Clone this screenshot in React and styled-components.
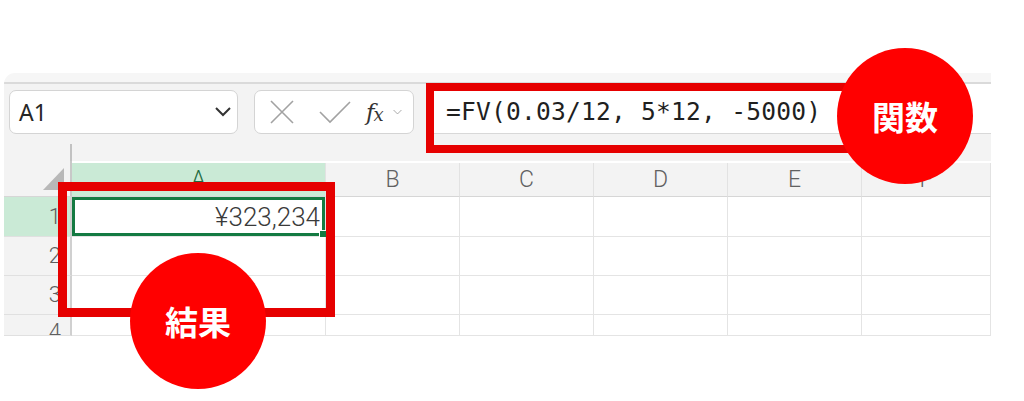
import styled, { createGlobalStyle } from 'styled-components';

const GlobalStyle = createGlobalStyle`
  html, body {
    margin: 0;
    padding: 0;
    background: #ffffff;
  }
  body {
    font-family: "Noto Sans", "Noto Sans CJK JP", sans-serif;
  }
`;

const Page = styled.div`
  position: relative;
  width: 1024px;
  height: 401px;
  padding: 73px 0 0 4px;
  box-sizing: border-box;
  overflow: hidden;
`;

const Frame = styled.div`
  width: 987px;
  display: flex;
  flex-direction: column;
`;

const TopEdge = styled.div`
  height: 9px;
  background: #f6f6f6;
  border-top-left-radius: 12px;
  border-bottom: 2px solid #dadada;
`;

const Toolbar = styled.div`
  display: flex;
  align-items: flex-start;
  height: 60px;
  padding-left: 5px;
  background: #f3f3f3;
`;

const NameBox = styled.div`
  width: 229px;
  height: 44px;
  margin-top: 6px;
  box-sizing: border-box;
  display: flex;
  align-items: center;
  justify-content: space-between;
  padding: 0 6px 0 9px;
  background: #ffffff;
  border: 1px solid #d4d4d4;
  border-radius: 7px;
  font-size: 23px;
  color: #262626;
`;

const ActionBox = styled(NameBox)`
  width: 160px;
  margin-left: 16px;
  padding: 0 6px 0 14px;
  justify-content: flex-start;
`;

const IconSlot = styled.span`
  display: flex;
  align-items: center;
  justify-content: center;
  width: ${(p) => p.$w}px;
  margin-right: ${(p) => p.$mr || 0}px;
  margin-left: ${(p) => p.$ml || 0}px;
`;

const Fx = styled.span`
  font-family: "DejaVu Serif", "Liberation Serif", serif;
  font-style: italic;
  font-size: 23px;
  color: #333333;
  letter-spacing: -1px;
  sub {
    font-size: 18px;
    vertical-align: -1px;
  }
`;

const FormulaInput = styled.div`
  flex: 1;
  height: 50px;
  margin-left: 15px;
  box-sizing: border-box;
  display: flex;
  align-items: center;
  padding: 6px 0 0 17px;
  background: #ffffff;
  border-bottom: 1px solid #d8d8d8;
  font-family: "DejaVu Sans Mono", "Liberation Mono", monospace;
  font-size: 24.6px;
  letter-spacing: 0.2px;
  color: #1f1f1f;
`;

const Sheet = styled.div`
  display: grid;
  grid-template-columns: 68px 254px 134px 134px 134px 134px 129px;
  grid-template-rows: 17px 36px 40px 39px 39px 21px;
`;

const Spacer = styled.div`
  background: #f3f3f3;
  border-right: ${(p) => (p.$splitter ? '2px solid #c2c2c2' : 'none')};
`;

const Corner = styled.div`
  position: relative;
  background: #f3f3f3;
  border-right: 2px solid #c8c8c8;
  border-bottom: 1px solid #d6d6d6;
`;

const CornerArrow = styled.span`
  position: absolute;
  right: 6px;
  bottom: 6px;
  width: 21px;
  height: 22px;
  background: #b8b8b8;
  clip-path: polygon(100% 0, 100% 100%, 0 100%);
`;

const ColHeader = styled.div`
  display: flex;
  align-items: center;
  justify-content: center;
  background: ${(p) => (p.$active ? '#caead6' : '#f3f3f3')};
  border-right: 1px solid #e2e2e2;
  border-bottom: 1px solid #d6d6d6;
  margin-top: 2px;
  font-family: Roboto, "Noto Sans", sans-serif;
  font-weight: 300;
  font-size: 23px;
  color: ${(p) => (p.$active ? '#1e6b3f' : '#616161')};
`;

const RowHeader = styled.div`
  display: flex;
  align-items: ${(p) => (p.$cut ? 'flex-start' : 'center')};
  justify-content: flex-end;
  padding: ${(p) => (p.$cut ? '6px 9px 0 0' : '0 9px 0 0')};
  overflow: hidden;
  background: ${(p) => (p.$active ? '#caead6' : '#f3f3f3')};
  border-right: 2px solid #d0d0d0;
  border-bottom: 1px solid #e0e0e0;
  font-family: Roboto, "Noto Sans", sans-serif;
  font-weight: 300;
  font-size: 22px;
  line-height: 1;
  color: #5f5f5f;
`;

const Cell = styled.div`
  position: relative;
  display: flex;
  align-items: center;
  justify-content: flex-end;
  padding-right: 5px;
  background: #ffffff;
  border-right: 1px solid #e4e4e4;
  border-bottom: 1px solid #e4e4e4;
  font-family: Roboto, "Noto Sans", sans-serif;
  font-weight: 300;
  font-size: 26px;
  color: #3a3a3a;
  box-shadow: ${(p) => (p.$selected ? 'inset 0 0 0 3px #147a42' : 'none')};

  &::after {
    content: '';
    display: ${(p) => (p.$selected ? 'block' : 'none')};
    position: absolute;
    right: -2px;
    bottom: -2px;
    width: 6px;
    height: 6px;
    background: #147a42;
    border: 1px solid #ffffff;
  }
`;

const RedFrame = styled.div`
  position: absolute;
  box-sizing: border-box;
  border: ${(p) => p.$bw}px solid #e60000;
`;

const Badge = styled.div`
  position: absolute;
  width: 136px;
  height: 136px;
  border-radius: 50%;
  background: #ff0000;
  display: flex;
  align-items: center;
  justify-content: center;
  color: #ffffff;
  font-family: "Noto Sans CJK JP", sans-serif;
  font-weight: 700;
  font-size: 33px;
`;

const XIcon = () => (
  <svg width="26" height="26" viewBox="0 0 26 26">
    <path d="M2 2 L24 24 M24 2 L2 24" stroke="#a2a2a2" strokeWidth="1.6" fill="none" />
  </svg>
);

const CheckIcon = () => (
  <svg width="32" height="24" viewBox="0 0 32 24">
    <path d="M1 12 L11 22 L31 2" stroke="#a2a2a2" strokeWidth="1.6" fill="none" />
  </svg>
);

const Chevron = ({ size = 16, color = '#333', width = 2 }) => (
  <svg width={size} height={size / 2 + 2} viewBox="0 0 16 10">
    <path d="M1 1 L8 8 L15 1" stroke={color} strokeWidth={width} fill="none" />
  </svg>
);

const columns = ['B', 'C', 'D', 'E', 'F'];
const rows = [
  { n: 1, active: true, value: '¥323,234' },
  { n: 2 },
  { n: 3 },
  { n: 4, cut: true },
];

export default function App() {
  return (
    <>
      <GlobalStyle />
      <Page>
        <Frame>
          <TopEdge />
          <Toolbar>
            <NameBox>
              <span>A1</span>
              <Chevron />
            </NameBox>
            <ActionBox>
              <IconSlot $w={26} $mr={24}><XIcon /></IconSlot>
              <IconSlot $w={32} $mr={15}><CheckIcon /></IconSlot>
              <Fx>f<sub>x</sub></Fx>
              <IconSlot $w={14} $ml={8}>
                <Chevron size={9} color="#9a9a9a" width={1.5} />
              </IconSlot>
            </ActionBox>
            <FormulaInput>=FV(0.03/12, 5*12, -5000)</FormulaInput>
          </Toolbar>
          <Sheet>
            <Spacer $splitter />
            {[0, 1, 2, 3, 4, 5].map((i) => <Spacer key={i} />)}
            <Corner><CornerArrow /></Corner>
            <ColHeader $active>A</ColHeader>
            {columns.map((c) => <ColHeader key={c}>{c}</ColHeader>)}
            {rows.map((r) => [
              <RowHeader key={'h' + r.n} $active={r.active} $cut={r.cut}>{r.n}</RowHeader>,
              <Cell key={'a' + r.n} $selected={r.active}>{r.value}</Cell>,
              ...columns.map((c) => <Cell key={c + r.n} />),
            ])}
          </Sheet>
        </Frame>

        <RedFrame $bw={8} style={{ left: 426, top: 83, width: 432, height: 70 }} />
        <RedFrame $bw={9} style={{ left: 58, top: 182, width: 277, height: 135 }} />
        <Badge style={{ left: 837, top: 48 }}>関数</Badge>
        <Badge style={{ left: 130, top: 253 }}>結果</Badge>
      </Page>
    </>
  );
}
